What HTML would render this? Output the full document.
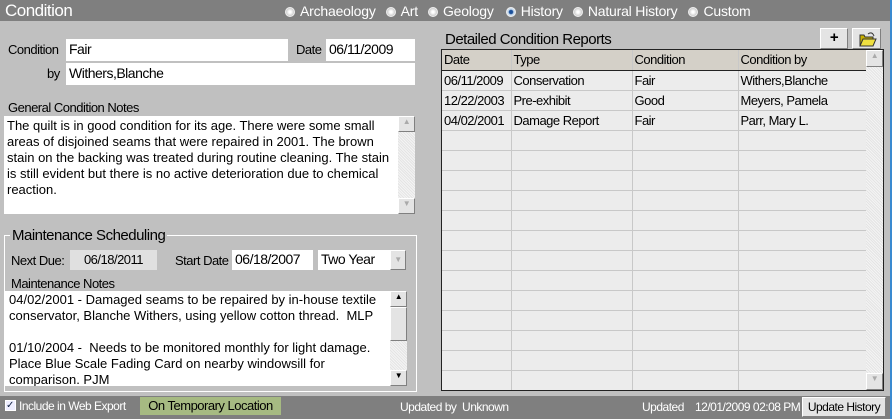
<!DOCTYPE html>
<html><head><meta charset="utf-8"><style>
*{margin:0;padding:0;box-sizing:border-box}
body{width:892px;height:419px;background:#c0c0c0;position:relative;overflow:hidden;font-family:"Liberation Sans",Arial,sans-serif;font-size:13px;letter-spacing:-0.5px;color:#000}
.a{position:absolute;white-space:nowrap}
.in{position:absolute;background:#fff;padding:2px 3px;font-size:14px;white-space:nowrap}
.n{font-family:"Liberation Sans",sans-serif;font-size:13px;line-height:16px;letter-spacing:0}
.sb{position:absolute;background:#eee;background-image:repeating-linear-gradient(45deg,#f4f4f4 0 1px,#e4e4e4 1px 2px)}
.btn{position:absolute;background:#e4e4e4;border:1px solid #fff;border-right-color:#808080;border-bottom-color:#808080;white-space:nowrap}
.rd{display:inline-block;width:10px;height:10px;border-radius:50%;background:radial-gradient(#fff 20%,#ccc 70%);border:1px solid #eee;margin:0 5px 0 10px;vertical-align:-1px}
td{border-right:1px solid #c8c8c8;border-bottom:1px solid #c8c8c8;height:20px;padding:0 2px;font-size:13px;white-space:nowrap;overflow:hidden}
</style></head><body>
<div class="a" style="left:0;top:0;width:892px;height:21px;background:#7f7f7f"></div>
<div class="a" style="left:5px;top:1px;font-size:17px;color:#fff">Condition</div>
<div class="a" style="left:275px;top:3px;font-size:14px;color:#fff;letter-spacing:-0.2px"><span class="rd"></span>Archaeology<span class="rd"></span>Art<span class="rd"></span>Geology<span class="rd" style="margin-left:12px;background:radial-gradient(#1a4f9a 30%,#cde 50%)"></span>History<span class="rd"></span>Natural History<span class="rd" style="margin-left:11px"></span>Custom</div>
<div class="a" style="left:890px;top:0;width:2px;height:419px;background:#3a8ad0"></div>

<div class="a" style="left:8px;top:42px">Condition</div>
<div class="in" style="left:66px;top:39px;width:222px;height:22px">Fair</div>
<div class="a" style="left:296px;top:42px">Date</div>
<div class="in" style="left:326px;top:39px;width:89px;height:22px">06/11/2009</div>
<div class="a" style="left:47px;top:66px">by</div>
<div class="in" style="left:66px;top:63px;width:349px;height:22px">Withers,Blanche</div>

<div class="a" style="left:8px;top:100px">General Condition Notes</div>
<div class="a n" style="left:4px;top:116px;height:98px;background:#fff;padding:2px 3px;white-space:normal;width:394px">The quilt is in good condition for its age. There were some small areas of disjoined seams that were repaired in 2001. The brown stain on the backing was treated during routine cleaning. The stain is still evident but there is no active deterioration due to chemical reaction.</div>
<div class="sb" style="left:398px;top:116px;width:17px;height:98px"></div>
<div class="btn" style="left:398px;top:116px;width:17px;height:16px;font-size:8px;color:#aaa;text-align:center">▲</div>
<div class="btn" style="left:398px;top:198px;width:17px;height:16px;font-size:8px;color:#aaa;text-align:center">▼</div>

<div class="a" style="left:4px;top:235px;width:413px;height:157px;border:1px solid #fff"></div>
<div class="a" style="left:10px;top:227px;font-size:15px;background:#c0c0c0;padding:0 2px">Maintenance Scheduling</div>
<div class="a" style="left:11px;top:253px">Next Due:</div>
<div class="a" style="left:70px;top:250px;width:87px;height:20px;background:#e0e0e0;text-align:center;padding-top:2px;font-size:13px">06/18/2011</div>
<div class="a" style="left:175px;top:253px">Start Date</div>
<div class="in" style="left:232px;top:250px;width:81px;height:20px;padding-top:1px">06/18/2007</div>
<div class="in" style="left:318px;top:250px;width:72px;height:20px;padding-top:1px">Two Year</div>
<div class="btn" style="left:390px;top:250px;width:16px;height:20px;font-size:8px;color:#aaa;text-align:center;padding-top:4px">▼</div>
<div class="a" style="left:11px;top:276px">Maintenance Notes</div>
<div class="a n" style="left:5px;top:291px;width:385px;height:95px;background:#fff;padding:1px 4px;white-space:normal;overflow:hidden">04/02/2001 - Damaged seams to be repaired by in-house textile conservator, Blanche Withers, using yellow cotton thread.&nbsp; MLP<br><br>01/10/2004 -&nbsp; Needs to be monitored monthly for light damage. Place Blue Scale Fading Card on nearby windowsill for comparison. PJM</div>
<div class="sb" style="left:390px;top:291px;width:17px;height:95px"></div>
<div class="btn" style="left:390px;top:291px;width:17px;height:16px;font-size:8px;text-align:center">▲</div>
<div class="btn" style="left:390px;top:307px;width:17px;height:34px"></div>
<div class="btn" style="left:390px;top:370px;width:17px;height:16px;font-size:8px;text-align:center">▼</div>

<div class="a" style="left:445px;top:31px;font-size:15px">Detailed Condition Reports</div>
<div class="btn" style="left:820px;top:28px;width:28px;height:21px;text-align:center;font-size:15px;font-weight:bold;line-height:18px">+</div>
<div class="btn" style="left:852px;top:28px;width:29px;height:21px"><svg width="27" height="19"><path d="M7 6h4l1 2h8v9H7z" fill="#c8b000" stroke="#333" stroke-width="1"/><path d="M7 17l3-7h13l-3 7z" fill="#f0e040" stroke="#333"/><path d="M15 5q4-3 6 2" fill="none" stroke="#333"/></svg></div>
<div class="a" style="left:441px;top:49px;width:443px;height:342px;background:#ececec;border:1px solid #222;overflow:hidden">
<table style="border-collapse:collapse;width:424px;table-layout:fixed">
<col style="width:69px"><col style="width:121px"><col style="width:106px"><col style="width:128px">
<tr style="background:#d4d0c8"><td style="border-bottom:1px solid #222">Date</td><td style="border-bottom:1px solid #222">Type</td><td style="border-bottom:1px solid #222">Condition</td><td style="border-bottom:1px solid #222;border-right:1px solid #222">Condition by</td></tr>
<tr><td>06/11/2009</td><td>Conservation</td><td>Fair</td><td>Withers,Blanche</td></tr>
<tr><td>12/22/2003</td><td>Pre-exhibit</td><td>Good</td><td>Meyers, Pamela</td></tr>
<tr><td>04/02/2001</td><td>Damage Report</td><td>Fair</td><td>Parr, Mary L.</td></tr>
<tr><td></td><td></td><td></td><td></td></tr><tr><td></td><td></td><td></td><td></td></tr><tr><td></td><td></td><td></td><td></td></tr><tr><td></td><td></td><td></td><td></td></tr><tr><td></td><td></td><td></td><td></td></tr><tr><td></td><td></td><td></td><td></td></tr><tr><td></td><td></td><td></td><td></td></tr><tr><td></td><td></td><td></td><td></td></tr><tr><td></td><td></td><td></td><td></td></tr><tr><td></td><td></td><td></td><td></td></tr><tr><td></td><td></td><td></td><td></td></tr><tr><td></td><td></td><td></td><td></td></tr><tr><td></td><td></td><td></td><td></td></tr>
</table>
<div class="sb" style="left:424px;top:0;width:17px;height:340px"></div>
<div class="btn" style="left:424px;top:0;width:17px;height:17px;font-size:8px;color:#aaa;text-align:center">▲</div>
<div class="btn" style="left:424px;top:323px;width:17px;height:17px;font-size:8px;color:#aaa;text-align:center">▼</div>
</div>

<div class="a" style="left:0;top:396px;width:890px;height:23px;background:#7f7f7f"></div>
<div class="a" style="left:5px;top:400px;width:11px;height:11px;background:#eef;border:1px solid #fff;font-size:10px;line-height:9px;color:#124">✓</div>
<div class="a" style="left:19px;top:399px;color:#fff;font-size:12px">Include in Web Export</div>
<div class="a" style="left:140px;top:397px;width:141px;height:18px;background:#a6ba82;font-size:13px;text-align:center;line-height:18px">On Temporary Location</div>
<div class="a" style="left:400px;top:400px;color:#fff;font-size:12px">Updated by&nbsp; Unknown</div>
<div class="a" style="left:642px;top:400px;color:#fff;font-size:12px">Updated</div>
<div class="a" style="left:695px;top:400px;color:#fff;font-size:12px">12/01/2009 02:08 PM</div>
<div class="btn" style="left:802px;top:397px;width:84px;height:20px;font-size:12px;text-align:center;line-height:18px">Update History</div>
</body></html>
